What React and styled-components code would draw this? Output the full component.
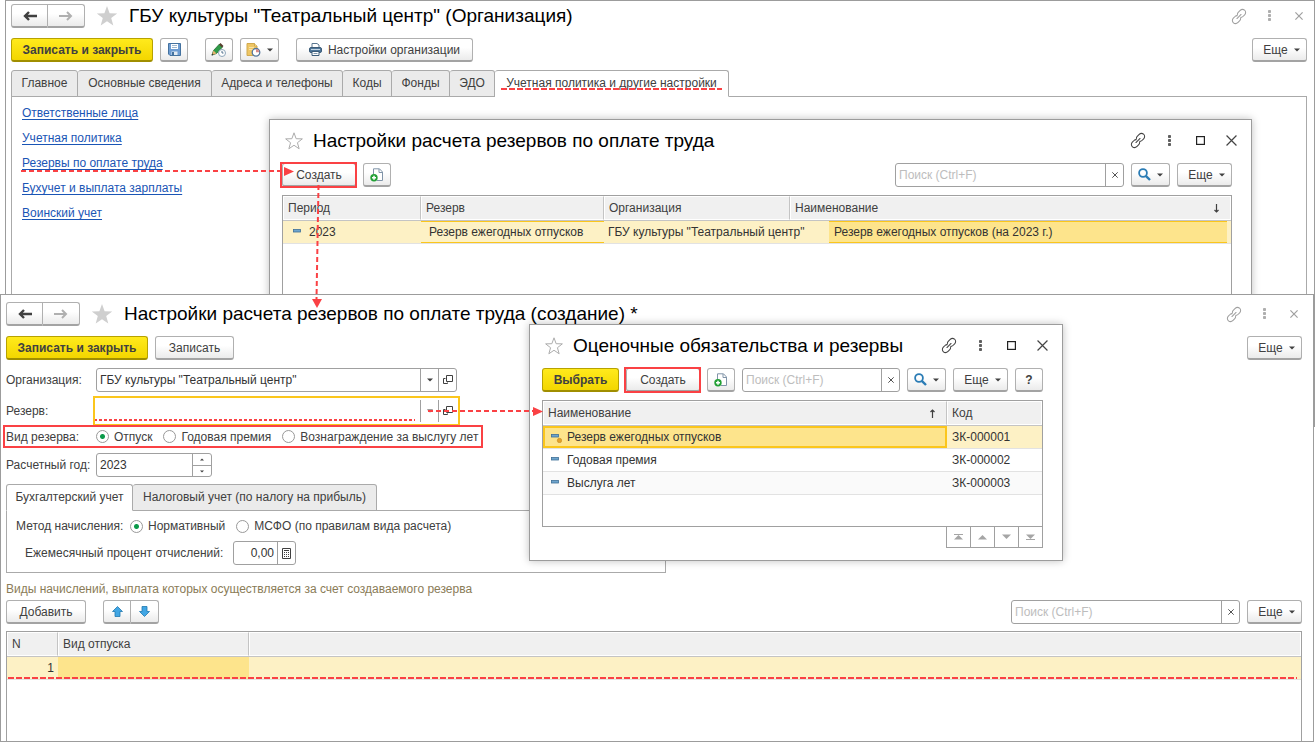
import React from 'react';
import styled, { createGlobalStyle, css } from 'styled-components';

const Global = createGlobalStyle`
  * { box-sizing: border-box; }
  html, body { margin: 0; background: #fff; overflow: hidden; }
  body, button, input {
    font-family: "Liberation Sans", Arial, sans-serif;
    font-size: 12px;
    color: #404040;
  }
`;

const Desktop = styled.main`
  position: relative;
  min-height: 100vh;
  overflow: hidden;
`;

const BackWindow = styled.section`
  position: absolute;
  top: 0;
  left: 5px;
  right: 0;
  height: 427px;
  padding: 3px 7px 0 5px;
  border: 1px solid #9c9c9c;
  background: #fff;
  display: flex;
  flex-direction: column;
`;

const FrontWindow = styled(BackWindow)`
  top: 294px;
  left: 0;
  right: 1px;
  bottom: 0;
  height: auto;
  padding: 7px 11px 0 5px;
`;

const Dialog = styled.section`
  position: absolute;
  top: ${(p) => p.$top}px;
  left: ${(p) => p.$left}px;
  ${(p) => (p.$width ? `width: ${p.$width}px;` : `right: ${p.$right}px;`)}
  height: ${(p) => p.$height}px;
  padding: 0 19px 0 12px;
  border: 1px solid #9c9c9c;
  background: #fff;
  box-shadow: 0 0 8px rgba(0, 0, 0, 0.25);
  display: flex;
  flex-direction: column;
`;

const WindowHeader = styled.header`
  display: flex;
  align-items: center;
  gap: 11px;
  height: 24px;
  margin-bottom: 10px;
`;

const DialogHeader = styled.header`
  display: flex;
  align-items: center;
  gap: 10px;
  height: 43px;
  flex-shrink: 0;
  padding: 0 0 2px 3px;
  margin-right: -7px;
`;

const Title = styled.h1`
  margin: 0;
  flex: 1;
  font-size: 19px;
  font-weight: 400;
  color: #000;
  white-space: nowrap;
`;

const HeaderIcons = styled.div`
  display: flex;
  align-items: center;
  gap: ${(p) => p.$gap}px;
`;

const IconButton = styled.button`
  width: 16px;
  height: 20px;
  padding: 0;
  border: 0;
  background: none;
  color: ${(p) => (p.$dim ? '#a0a0a0' : '#444')};
  display: flex;
  align-items: center;
  justify-content: center;
`;

const Toolbar = styled.div`
  display: flex;
  flex-shrink: 0;
  gap: 7px;
  margin-bottom: ${(p) => p.$mb || 8}px;
`;

const Spacer = styled.div`
  flex: ${(p) => (p.$w ? `0 0 ${p.$w}px` : 1)};
`;

const Button = styled.button`
  position: relative;
  height: 24px;
  min-width: ${(p) => p.$w || 28}px;
  padding: 0;
  border: 1px solid #b0b0b0;
  border-bottom: 2px solid #a3a3a3;
  border-radius: 3px;
  background: linear-gradient(#fff 40%, #ebebeb);
  display: flex;
  align-items: center;
  justify-content: center;
  gap: 6px;
  white-space: nowrap;
  ${(p) => p.$primary && css`
    border-color: #b7a200;
    border-bottom-color: #a08e00;
    background: linear-gradient(#ffea1c, #f3d600);
    font-weight: 700;
  `}
  ${(p) => p.$marked && css`
    &::after {
      content: '';
      position: absolute;
      inset: -2px -2px -3px -3px;
      border: 2px solid #fa4144;
    }
  `}
`;

const MoreButton = styled(Button)`
  padding-left: 4px;
`;

const Group = styled.div`
  display: flex;
  ${Button}:first-child { border-radius: 3px 0 0 3px; }
  ${Button}:last-child { border-radius: 0 3px 3px 0; border-left: 0; }
`;

const Tabs = styled.div`
  display: flex;
  flex-shrink: 0;
  margin-bottom: -1px;
  position: relative;
`;

const Tab = styled.button`
  height: 27px;
  padding: 0 8px 2px;
  min-width: ${(p) => p.$w}px;
  border: 1px solid #aaa;
  border-left-width: ${(p) => (p.$first ? 1 : 0)}px;
  border-radius: 3px 3px 0 0;
  background: #ebebeb;
  white-space: nowrap;
  ${(p) => p.$active && css`
    background: #fff;
    border-bottom-color: #fff;
  `}
`;

const dashes = css`
  background: repeating-linear-gradient(90deg, #fa4144 0 6px, transparent 6px 8px);
`;

const Underlined = styled.span`
  position: relative;
  &::after {
    content: '';
    position: absolute;
    left: -5px;
    right: -5px;
    bottom: 0;
    height: 2px;
    ${dashes}
  }
`;

const TabPanel = styled.div`
  border: 1px solid #aaa;
  flex: 1;
`;

const LinkList = styled.nav`
  display: flex;
  flex-direction: column;
  align-items: flex-start;
  padding: 4px 10px;
  line-height: 25px;
  a { color: #1a55b5; text-decoration: underline; text-underline-offset: 2px; }
`;

const Field = styled.div`
  display: flex;
  width: ${(p) => p.$w}px;
  height: 24px;
  border: 1px solid #a0a0a0;
  border-radius: 3px;
  background: #fff;
  ${(p) => p.$focused && css`
    border-color: transparent;
    border-radius: 0;
    outline: 2px solid #fbc61c;
    outline-offset: 1px;
  `}
`;

const Input = styled.input`
  flex: 1;
  min-width: 0;
  padding: 0 3px;
  border: 0;
  outline: 0;
  background: none;
  color: #333;
  text-align: ${(p) => p.$align || 'left'};
  &::placeholder { color: #bdbdbd; opacity: 1; }
`;

const RequiredInput = styled(Input)`
  margin: 0 5px 1px -3px;
  background: repeating-linear-gradient(90deg, #fa4144 0 3px, transparent 3px 5px) bottom / 100% 2px no-repeat;
`;

const FieldButton = styled.button`
  width: 18px;
  padding: 0;
  border: 0;
  border-left: 1px solid #a0a0a0;
  background: none;
  display: flex;
  align-items: center;
  justify-content: center;
`;

const Stepper = styled.div`
  display: grid;
  grid-template-rows: 1fr 1fr;
  border-left: 1px solid #a0a0a0;
  button { border-left: 0; }
  button + button { border-top: 1px solid #a0a0a0; }
`;

const FormRow = styled.div`
  display: flex;
  align-items: center;
  height: 24px;
  flex-shrink: 0;
  margin-bottom: 7px;
  white-space: nowrap;
`;

const MarkedRow = styled(FormRow)`
  width: 480px;
  height: 23px;
  margin: -5px 0 5px -3px;
  padding-left: 1px;
  border: 2px solid #fa4144;
`;

const Caption = styled.label`
  flex: 0 0 ${(p) => p.$w || 90}px;
`;

const Option = styled.label`
  display: flex;
  align-items: center;
  gap: 5px;
  margin-right: 11px;
`;

const Radio = styled.input.attrs({ type: 'radio' })`
  appearance: none;
  width: 13px;
  height: 13px;
  margin: 0;
  border: 1px solid #999;
  border-radius: 50%;
  background: #fff;
  &:checked { background: radial-gradient(circle, #0b9a4a 0 2px, #fff 3px); }
`;

const MethodPanel = styled.div`
  width: 660px;
  height: 63px;
  flex-shrink: 0;
  padding: 3px 9px;
  border: 1px solid #aaa;
`;

const MethodRow = styled(FormRow)`
  margin-bottom: 3px;
  padding-left: ${(p) => p.$indent || 0}px;
`;

const Hint = styled.p`
  margin: 8px 0 3px;
  line-height: 16px;
  color: #8a7c57;
`;

const Frame = styled.div`
  flex: ${(p) => (p.$h ? `0 0 ${p.$h}px` : 1)};
  border: 1px solid #a0a0a0;
  border-bottom-width: ${(p) => (p.$h ? 1 : 0)}px;
`;

const Table = styled.table`
  display: block;
  thead, tbody { display: block; }
`;

const Row = styled.tr`
  display: grid;
  grid-template-columns: ${(p) => p.$cols};
  position: relative;
  height: 23px;
  border-bottom: 1px solid #e2e2e2;
  background: ${(p) => (p.$selected ? '#fdf1c5' : p.$alt ? '#fafafa' : '#fff')};
  ${(p) => p.$dashed && css`
    &::after {
      content: '';
      position: absolute;
      left: 1px;
      right: 4px;
      bottom: 0;
      height: 2px;
      ${dashes}
    }
  `}
`;

const HeadRow = styled(Row)`
  height: 25px;
  border-bottom: 1px solid #c4c4c4;
`;

const Head = styled.th`
  display: flex;
  align-items: center;
  justify-content: space-between;
  padding: 0 10px 0 4px;
  border: 1px solid #fff;
  border-right-color: #c4c4c4;
  background: #f0f0f0;
  font-weight: 400;
  white-space: nowrap;
  &:last-child { border-right-color: #fff; }
`;

const Cell = styled.td`
  display: flex;
  align-items: center;
  justify-content: ${(p) => (p.$right ? 'flex-end' : 'flex-start')};
  gap: 5px;
  padding: 0 4px 0 ${(p) => p.$pad || 5}px;
  color: #333;
  white-space: nowrap;
  ${(p) => p.$lined && css`
    border: solid #fbc61c;
    border-width: 1px 0;
  `}
  ${(p) => p.$current && css`
    background: #fde48c;
  `}
  ${(p) => p.$boxed && css`
    border: 2px solid #fbc61c;
  `}
`;

const Pager = styled.div`
  display: flex;
  align-self: flex-end;
  border: 1px solid #a0a0a0;
  border-top: 0;
  button { width: 24px; height: 20px; }
  button:first-child { border-left: 0; width: 23px; }
`;

const Annotations = styled.svg`
  position: absolute;
  top: 0;
  left: 0;
  pointer-events: none;
`;

const STAR = 'M11 1l2.6 7.2 7.6.2-6 4.7 2.1 7.4L11 16.2l-6.3 4.3 2.1-7.4-6-4.7 7.6-.2z';

const Star = ({ outline }) => (
  <svg width={outline ? 18 : 22} height={outline ? 18 : 22} viewBox="0 0 22 22" fill={outline ? 'none' : '#cfcfcf'} stroke={outline ? '#aaa' : 'none'} strokeWidth="1.2">
    <path d={STAR} />
  </svg>
);

const Arrow = ({ right }) => (
  <svg width="16" height="12" viewBox="0 0 16 12" fill="none" stroke={right ? '#b0b0b0' : '#404040'} strokeWidth="2">
    {right ? <path d="M1 6h12M9 2l4 4-4 4" /> : <path d="M15 6H3M7 2L3 6l4 4" strokeWidth="2.4" />}
  </svg>
);

const LinkIcon = () => (
  <svg width="17" height="17" viewBox="0 0 17 17" fill="none" stroke="currentColor" strokeWidth="1.1" strokeLinecap="round">
    <path d="M6.800 6.500c-.1-1 .2-1.700.9-2.400l1.800-1.800c1.300-1.300 3.500-1.600 4.900-.5 1.500 1.200 1.500 3.500.1 4.900l-1.800 1.800c-.7.7-1.500 1-2.400.9" />
    <path d="M10.200 10.500c.1 1-.2 1.700-.9 2.400l-1.800 1.800c-1.300 1.300-3.500 1.600-4.900.5-1.500-1.200-1.500-3.500-.1-4.900l1.800-1.800c.7-.7 1.500-1 2.400-.9" />
    <path d="M6.300 10.700l4.400-4.400" />
  </svg>
);

const Dots = () => (
  <svg width="3" height="12" viewBox="0 0 3 12" fill="currentColor" opacity=".85">
    <rect width="3" height="3" rx=".8" />
    <rect y="4" width="3" height="3" rx=".8" />
    <rect y="8" width="3" height="3" rx=".8" />
  </svg>
);

const Square = () => (
  <svg width="9" height="9" viewBox="0 0 9 9" fill="none" stroke="#222" strokeWidth="1.2">
    <rect x="0.6" y="0.6" width="7.8" height="7.8" />
  </svg>
);

const Cross = ({ size }) => (
  <svg width={size} height={size} viewBox="0 0 10 10" fill="none" stroke="currentColor" strokeWidth={size > 8 ? 1.1 : 1.5}>
    <path d="M.5.5l9 9M9.500.5l-9 9" />
  </svg>
);

const Caret = () => (
  <svg width="6" height="4" viewBox="0 0 6 4" fill="#404040"><path d="M0 .5h6L3 3.500z" /></svg>
);

const TinyCaret = ({ up }) => (
  <svg width="4" height="3" viewBox="0 0 4 3" fill="#404040"><path d={up ? 'M0 2.500h4L2 .5z' : 'M0 .5h4L2 2.500z'} /></svg>
);

const OpenIcon = () => (
  <svg width="10" height="10" viewBox="0 0 10 10" fill="none" stroke="#404040">
    <path d="M3.500.5h6v6h-6z" />
    <path d="M2.500 3.500h-2v5h4v-1" />
  </svg>
);

const Floppy = () => (
  <svg width="13" height="13" viewBox="0 0 13 13">
    <path d="M1 .5h11.500v12H2L.5 11V.5z" fill="#6d9cd2" stroke="#44729f" />
    <path d="M3 1h7v5H3z" fill="#fff" />
    <path d="M4 2.500h5M4 4.500h5" stroke="#9db6cd" />
    <path d="M3.500 8.500h6V12h-6z" fill="#e3ebf2" />
    <path d="M4 9h2v3H4z" fill="#44729f" />
  </svg>
);

const PencilClock = () => (
  <svg width="16" height="16" viewBox="0 0 16 16">
    <path d="M1 13l1.500-4.500L8.500 2l3 3-6 6.500z" fill="#2f9c48" stroke="#1f6d33" strokeWidth=".8" />
    <path d="M1 13l1.500-4.500 3 3z" fill="#e7b06c" />
    <path d="M.5 13.500l.7-2 1.400 1.400z" fill="#333" />
    <path d="M8 2.500L9.500 1l3 3L11 5.500z" fill="#57402f" />
    <circle cx="11" cy="11" r="3.500" fill="#fff" stroke="#8ea6ba" />
    <path d="M11 9v2h1.500" fill="none" stroke="#50718d" />
  </svg>
);

const NoteClock = () => (
  <svg width="15" height="14" viewBox="0 0 15 14">
    <path d="M1 .5h7.500L11 3v9.500H1z" fill="#efc664" stroke="#d0a94f" />
    <path d="M3 4.500h5M3 6.500h4" stroke="#f8e2a5" />
    <path d="M8.500.5V3H11" fill="#fff0bd" stroke="#d0a94f" />
    <circle cx="10" cy="9.300" r="3.800" fill="#fff" stroke="#54779c" strokeWidth="1.300" />
    <path d="M10 6v3.300h3.200A3.300 3.300 0 0 0 10 6" fill="#d88a8a" />
  </svg>
);

const Printer = () => (
  <svg width="13" height="13" viewBox="0 0 13 13">
    <path d="M3 .5h5L10 2v3H3z" fill="#fff" stroke="#5b7790" />
    <rect x=".5" y="4.500" width="12" height="5" rx="1.500" fill="#4f7699" stroke="#3b5b78" />
    <path d="M2 6.500h9" stroke="#c3d5e4" />
    <path d="M3 8.500h7v4H3z" fill="#fff" stroke="#3b5b78" />
    <path d="M4.500 10.500h4" stroke="#7f98ad" />
  </svg>
);

const CopyAdd = () => (
  <svg width="14" height="14" viewBox="0 0 14 14">
    <path d="M3.500 6V.8h6L12.500 4v8.500H7" fill="#fff" stroke="#8094a8" />
    <path d="M9 1v3.500h3" fill="none" stroke="#8094a8" />
    <circle cx="4" cy="9.800" r="3.700" fill="#23a036" />
    <path d="M4 7.800v4M2 9.800h4" stroke="#fff" strokeWidth="1.500" />
  </svg>
);

const Magnifier = () => (
  <svg width="13" height="13" viewBox="0 0 13 13" fill="none" stroke="#2b7cb5">
    <circle cx="5" cy="5" r="3.900" strokeWidth="1.800" />
    <path d="M7.800 7.800l4.200 4.200" strokeWidth="2.400" />
  </svg>
);

const BlueArrow = ({ down }) => (
  <svg width="11" height="11" viewBox="0 0 11 11" fill="#41a6e4" stroke="#1f78b0" strokeWidth=".8">
    <path d={down ? 'M5.500 10.500l5-5H8V.5H3v5H.5z' : 'M5.500.5l5 5H8v5H3v-5H.5z'} />
  </svg>
);

const CalcIcon = () => (
  <svg width="9" height="11" viewBox="0 0 9 11" fill="none" stroke="#404040">
    <path d="M.5.5h8v10h-8z" />
    <path d="M2 2.500h5" />
    <path d="M2 4.500h5M2 6.500h5M2 8.500h5" strokeDasharray="1 1" />
  </svg>
);

const SortArrow = ({ up }) => (
  <svg width="7" height="9" viewBox="0 0 7 9" fill="none" stroke="#404040" strokeWidth="1.2">
    <path d={up ? 'M3.500 9V1M1.500 3L3.500 1l2 2' : 'M3.500 0v8M1.500 6l2 2 2-2'} />
  </svg>
);

const ItemMark = ({ predefined }) => (
  <svg width="11" height="12" viewBox="0 0 11 12">
    <rect x=".5" y="3.500" width="7" height="2.500" fill="#6fa5cd" stroke="#3d6f97" strokeWidth=".8" />
    {predefined && <circle cx="8.500" cy="9.500" r="2.200" fill="#e5a32b" stroke="#b87b15" strokeWidth=".5" />}
  </svg>
);

const PagerIcon = ({ down, edge }) => (
  <svg width="11" height="8" viewBox="0 0 11 8" fill="#a5a5a5">
    <path d={down ? 'M1 1.500h9L5.500 6z' : 'M1 6.500h9L5.500 2z'} />
    {edge && <rect y={down ? 6 : 1} x="1" width="9" height="1" />}
  </svg>
);

const NavButtons = () => (
  <Group>
    <Button $w={37} aria-label="Назад"><Arrow /></Button>
    <Button $w={37} aria-label="Вперед"><Arrow right /></Button>
  </Group>
);

const WindowIcons = ({ dialog }) => (
  <HeaderIcons $gap={dialog ? 15 : 14}>
    <IconButton $dim={!dialog} aria-label="Ссылка"><LinkIcon /></IconButton>
    <IconButton $dim={!dialog} aria-label="Меню"><Dots /></IconButton>
    {dialog && <IconButton aria-label="Развернуть"><Square /></IconButton>}
    <IconButton $dim={!dialog} aria-label="Закрыть"><Cross size={dialog ? 11 : 8} /></IconButton>
  </HeaderIcons>
);

const More = () => <MoreButton $w={55}>Еще <Caret /></MoreButton>;

const Search = ({ width }) => (
  <Field $w={width}>
    <Input type="text" placeholder="Поиск (Ctrl+F)" aria-label="Поиск" />
    <FieldButton aria-label="Очистить"><Cross size={6} /></FieldButton>
  </Field>
);

const tabs = [
  ['Главное', 67],
  ['Основные сведения', 134],
  ['Адреса и телефоны', 131],
  ['Коды', 49],
  ['Фонды', 58],
  ['ЭДО', 45],
];

const links = ['Ответственные лица', 'Учетная политика', 'Резервы по оплате труда', 'Бухучет и выплата зарплаты', 'Воинский учет'];

const liabilities = [
  ['Резерв ежегодных отпусков', 'ЗК-000001'],
  ['Годовая премия', 'ЗК-000002'],
  ['Выслуга лет', 'ЗК-000003'],
];

const OrganizationWindow = () => (
  <BackWindow>
    <WindowHeader>
      <NavButtons />
      <Star />
      <Title>ГБУ культуры "Театральный центр" (Организация)</Title>
      <WindowIcons />
    </WindowHeader>
    <Toolbar>
      <Button $primary $w={142}>Записать и закрыть</Button>
      <Button aria-label="Сохранить"><Floppy /></Button>
      <Spacer $w={3} />
      <Button aria-label="Изменить"><PencilClock /></Button>
      <Button $w={39} aria-label="История"><NoteClock /><Caret /></Button>
      <Spacer $w={3} />
      <Button $w={177}><Printer />Настройки организации</Button>
      <Spacer />
      <More />
    </Toolbar>
    <Tabs role="tablist">
      {tabs.map(([name, width], i) => (
        <Tab key={name} role="tab" $w={width} $first={i === 0}>{name}</Tab>
      ))}
      <Tab role="tab" aria-selected="true" $w={234} $active>
        <Underlined>Учетная политика и другие настройки</Underlined>
      </Tab>
    </Tabs>
    <TabPanel>
      <LinkList>
        {links.map((name) => <a key={name} href="#">{name}</a>)}
      </LinkList>
    </TabPanel>
  </BackWindow>
);

const ReserveListDialog = () => (
  <Dialog $top={119} $left={269} $right={63} $height={220}>
    <DialogHeader>
      <Star outline />
      <Title>Настройки расчета резервов по оплате труда</Title>
      <WindowIcons dialog />
    </DialogHeader>
    <Toolbar>
      <Button $w={74} $marked>Создать</Button>
      <Button aria-label="Скопировать"><CopyAdd /></Button>
      <Spacer />
      <Search width={229} />
      <Button $w={39} aria-label="Найти"><Magnifier /><Caret /></Button>
      <More />
    </Toolbar>
    <Frame>
      <Table cellSpacing="0" cellPadding="0">
        <thead>
          <HeadRow $cols="138px 183px 186px 1fr">
            <Head>Период</Head>
            <Head>Резерв</Head>
            <Head>Организация</Head>
            <Head>Наименование <SortArrow /></Head>
          </HeadRow>
        </thead>
        <tbody>
          <Row $cols="138px 183px 225px 1fr 4px" $selected>
            <Cell $pad={10}><ItemMark />2023</Cell>
            <Cell $pad={8} $lined>Резерв ежегодных отпусков</Cell>
            <Cell $pad={4}>ГБУ культуры "Театральный центр"</Cell>
            <Cell $pad={5} $lined $current>Резерв ежегодных отпусков (на 2023 г.)</Cell>
          </Row>
        </tbody>
      </Table>
    </Frame>
  </Dialog>
);

const ReserveWindow = () => (
  <FrontWindow>
    <WindowHeader>
      <NavButtons />
      <Star />
      <Title>Настройки расчета резервов по оплате труда (создание) *</Title>
      <WindowIcons />
    </WindowHeader>
    <Toolbar>
      <Button $primary $w={142}>Записать и закрыть</Button>
      <Button $w={79}>Записать</Button>
      <Spacer />
      <More />
    </Toolbar>
    <FormRow>
      <Caption htmlFor="org">Организация:</Caption>
      <Field $w={361}>
        <Input id="org" type="text" defaultValue={'ГБУ культуры "Театральный центр"'} />
        <FieldButton aria-label="Выбрать"><Caret /></FieldButton>
        <FieldButton aria-label="Открыть"><OpenIcon /></FieldButton>
      </Field>
    </FormRow>
    <FormRow>
      <Caption htmlFor="reserve">Резерв:</Caption>
      <Field $w={361} $focused>
        <RequiredInput id="reserve" type="text" />
        <FieldButton aria-label="Выбрать"><Caret /></FieldButton>
        <FieldButton aria-label="Открыть"><OpenIcon /></FieldButton>
      </Field>
    </FormRow>
    <MarkedRow>
      <Caption as="span">Вид резерва:</Caption>
      <Option><Radio name="kind" defaultChecked />Отпуск</Option>
      <Option><Radio name="kind" />Годовая премия</Option>
      <Option><Radio name="kind" />Вознаграждение за выслугу лет</Option>
    </MarkedRow>
    <FormRow>
      <Caption htmlFor="year">Расчетный год:</Caption>
      <Field $w={116}>
        <Input id="year" type="text" defaultValue="2023" />
        <Stepper>
          <FieldButton aria-label="Больше"><TinyCaret up /></FieldButton>
          <FieldButton aria-label="Меньше"><TinyCaret /></FieldButton>
        </Stepper>
      </Field>
    </FormRow>
    <Tabs role="tablist">
      <Tab role="tab" aria-selected="true" $w={127} $first $active>Бухгалтерский учет</Tab>
      <Tab role="tab" $w={244}>Налоговый учет (по налогу на прибыль)</Tab>
    </Tabs>
    <MethodPanel>
      <MethodRow>
        <Caption as="span" $w={114}>Метод начисления:</Caption>
        <Option><Radio name="method" defaultChecked />Нормативный</Option>
        <Option><Radio name="method" />МСФО (по правилам вида расчета)</Option>
      </MethodRow>
      <MethodRow $indent={9}>
        <Caption $w={208} htmlFor="percent">Ежемесячный процент отчислений:</Caption>
        <Field $w={63}>
          <Input id="percent" type="text" defaultValue="0,00" $align="right" />
          <FieldButton aria-label="Калькулятор"><CalcIcon /></FieldButton>
        </Field>
      </MethodRow>
    </MethodPanel>
    <Hint>Виды начислений, выплата которых осуществляется за счет создаваемого резерва</Hint>
    <Toolbar $mb={7}>
      <Button $w={80}>Добавить</Button>
      <Spacer $w={3} />
      <Group>
        <Button aria-label="Вверх"><BlueArrow /></Button>
        <Button aria-label="Вниз"><BlueArrow down /></Button>
      </Group>
      <Spacer />
      <Search width={229} />
      <More />
    </Toolbar>
    <Frame>
      <Table cellSpacing="0" cellPadding="0">
        <thead>
          <HeadRow $cols="51px 191px 1fr">
            <Head>N</Head>
            <Head>Вид отпуска</Head>
            <Head />
          </HeadRow>
        </thead>
        <tbody>
          <Row $cols="51px 191px 1fr" $selected $dashed>
            <Cell $right>1</Cell>
            <Cell $current />
            <Cell />
          </Row>
        </tbody>
      </Table>
    </Frame>
  </FrontWindow>
);

const LiabilityDialog = () => (
  <Dialog $top={324} $left={529} $width={534} $height={237}>
    <DialogHeader>
      <Star outline />
      <Title>Оценочные обязательства и резервы</Title>
      <WindowIcons dialog />
    </DialogHeader>
    <Toolbar>
      <Button $primary $w={77}>Выбрать</Button>
      <Button $w={74} $marked>Создать</Button>
      <Button aria-label="Скопировать"><CopyAdd /></Button>
      <Search width={158} />
      <Button $w={39} aria-label="Найти"><Magnifier /><Caret /></Button>
      <More />
      <Button><b>?</b></Button>
    </Toolbar>
    <Frame $h={127}>
      <Table cellSpacing="0" cellPadding="0">
        <thead>
          <HeadRow $cols="1fr 95px">
            <Head>Наименование <SortArrow up /></Head>
            <Head>Код</Head>
          </HeadRow>
        </thead>
        <tbody>
          {liabilities.map(([name, code], i) => (
            <Row key={code} $cols="1fr 95px" $selected={i === 0} $alt={i === 2}>
              <Cell $pad={i === 0 ? 6 : 8} $current={i === 0} $boxed={i === 0}>
                <ItemMark predefined={i === 0} />{name}
              </Cell>
              <Cell>{code}</Cell>
            </Row>
          ))}
        </tbody>
      </Table>
    </Frame>
    <Pager>
      <FieldButton aria-label="В начало"><PagerIcon edge /></FieldButton>
      <FieldButton aria-label="Назад"><PagerIcon /></FieldButton>
      <FieldButton aria-label="Вперед"><PagerIcon down /></FieldButton>
      <FieldButton aria-label="В конец"><PagerIcon down edge /></FieldButton>
    </Pager>
  </Dialog>
);

const App = () => (
  <>
    <Global />
    <Desktop>
      <OrganizationWindow />
      <ReserveListDialog />
      <ReserveWindow />
      <LiabilityDialog />
      <Annotations width="560" height="440" fill="#fa4144" stroke="none">
        <g stroke="#fa4144" strokeWidth="2" strokeDasharray="5 3">
          <path d="M21 171H284" />
          <path d="M318.500 185L316.500 299" />
          <path d="M428 411H534" />
        </g>
        <path d="M284 167l10 4.500-10 4.500z" />
        <path d="M312 299h10l-5 9z" />
        <path d="M533 407l10 4.500-10 4.500z" />
      </Annotations>
    </Desktop>
  </>
);

export default App;
